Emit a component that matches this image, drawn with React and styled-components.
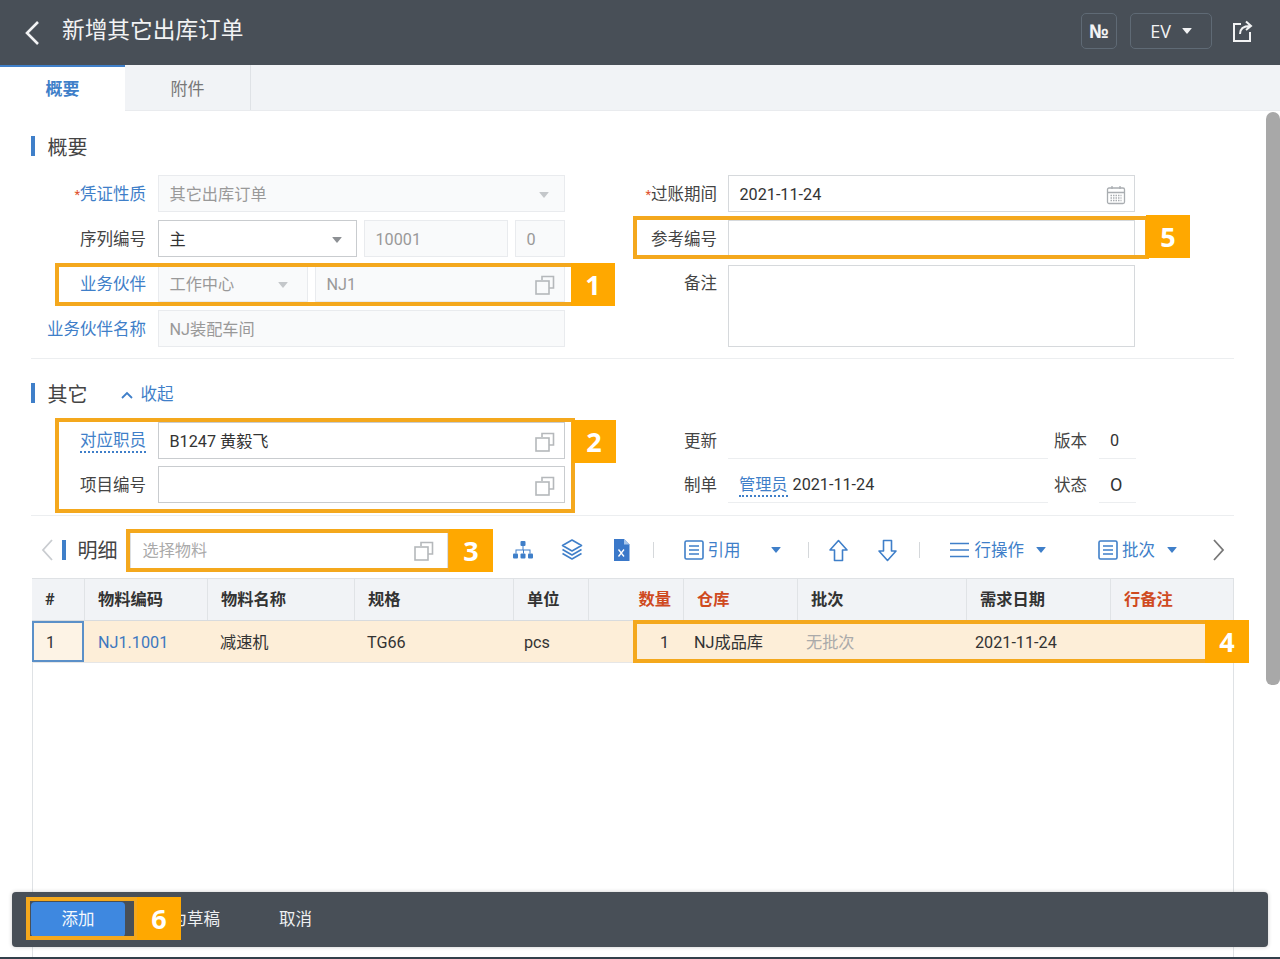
import React from "react";
import styled, { createGlobalStyle } from "styled-components";

const Global = createGlobalStyle`
  html, body { margin: 0; padding: 0; background: #fff; }
  * { box-sizing: border-box; }
  body { font-family: Roboto, "Noto Sans CJK SC", sans-serif; color: #333; line-height: 20px; }
`;

const BLUE = "#3f7fc9";

const Page = styled.div`
  position: relative; width: 1280px; height: 959px; overflow: hidden;
  display: flex; flex-direction: column; background: #fff;
  border-bottom: 2px solid #33404b;
`;
const Header = styled.header`
  flex: none; height: 65px; background: #484f57; display: flex; align-items: center;
  padding: 0 27px 0 24px; color: #f2f3f4;
`;
const BackIcon = styled.svg`width: 16px; height: 26px; margin-right: 22px; flex: none;`;
const Title = styled.h1`margin: -3px 0 0; flex: 1; font-size: 22.7px; font-weight: 400; line-height: 30px;`;
const HeadBtn = styled.div`
  height: 36px; width: ${p => p.$w}px; margin-right: ${p => p.$mr}px; margin-top: -3px;
  border: 1px solid #5f6a75; border-radius: 5px; display: flex; align-items: center; justify-content: center;
  font-size: ${p => p.$fs || 18}px; font-weight: ${p => p.$fw || 400}; gap: 11px; font-family: "Open Sans", sans-serif;
`;
const ShareIcon = styled.svg`width: 21px; height: 22px; margin-top: -4px; flex: none;`;
const Caret = styled.i`
  display: inline-block; width: 0; height: 0; margin-right: ${p => p.$mr || 0}px;
  border-left: 5px solid transparent; border-right: 5px solid transparent;
  border-top: 6px solid ${p => p.$c || "#f2f3f4"}; border-radius: 1px;
`;
const Tabs = styled.nav`flex: none; height: 46px; background: #f1f3f6; display: flex; border-bottom: 1px solid #e9ebee;`;
const Tab = styled.div`
  display: flex; align-items: center; justify-content: center; font-size: 17px; padding-top: 2px;
  ${p => p.$active
    ? `width:125px; background:#fff; color:#3f7fc9; font-weight:700; border-top:2px solid #3f7fc9; margin-bottom:-1px; padding-top:0;`
    : `width:126px; color:#777; border-right:1px solid #dfe2e6;`}
`;
const Content = styled.main`flex: 1; min-height: 0; display: flex; flex-direction: column; padding: 0 46px 0 31px;`;
const Section = styled.section`padding: ${p => p.$pt}px 0 ${p => p.$pb}px; border-bottom: 1px solid #eceef0;`;
const SecHead = styled.div`display: flex; align-items: center; height: 20px; margin-bottom: 19px;`;
const Bar = styled.span`flex: none; width: 3.5px; height: 20px; background: ${BLUE};`;
const SecTitle = styled.h2`margin: 0 0 0 13px; padding-top: 3px; font-size: 20px; font-weight: 400; color: #444; line-height: 20px;`;
const Collapse = styled.span`display: flex; align-items: center; gap: 8px; margin-left: 33px; padding-top: 3px; color: ${BLUE}; font-size: 16.5px;`;
const Columns = styled.div`display: flex; align-items: flex-start;`;
const LeftCol = styled.div`width: 534px; display: flex; flex-direction: column; gap: ${p => p.$gap}px;`;
const RightCol = styled.div`margin-left: 70px; width: 505px; display: flex; flex-direction: column; gap: ${p => p.$gap}px;`;
const Row = styled.div`
  display: grid; grid-template-columns: ${p => p.$cols}; height: ${p => p.$h || 37}px; align-items: stretch; column-gap: ${p => p.$gap ?? 12}px;
`;
const Label = styled.label`
  display: flex; align-items: ${p => p.$top ? "flex-start" : "center"}; justify-content: flex-end; font-size: 16.5px; white-space: nowrap;
  padding-top: ${p => p.$top ? 9 : 2}px;
  color: ${p => p.$link ? BLUE : "#444"};
`;
const Req = styled.span`color: #e0502a; font-size: 13px;`;
const Dashed = styled.span`border-bottom: 2px dotted ${BLUE}; line-height: 21px;`;
const Field = styled.div`
  display: flex; align-items: center; justify-content: space-between; min-width: 0;
  padding: 2px ${p => p.$pr ?? 11}px 0 10.5px; font-size: 16.2px; white-space: nowrap;
  border: 1px solid ${p => p.$disabled ? "#e9ebee" : "#d6d9dc"};
  background: ${p => p.$disabled ? "#f9fafb" : "#fff"};
  color: ${p => p.$disabled ? "#999" : "#333"};
  ${p => p.$dark && "border-color:#c9cccf;"}
`;
const Split = styled.div`display: grid; grid-template-columns: ${p => p.$cols}; column-gap: ${p => p.$gap}px;`;
const Plain = styled.div`
  display: flex; align-items: center; margin-left: ${p => p.$ml}px; padding: 2px 0 0 11px; gap: 5px; font-size: ${p => p.$fs || 16.2}px; color: #333; white-space: nowrap;
  border-bottom: 1px solid #eceef0;
`;
const UserLink = styled.span`color: ${BLUE}; border-bottom: 2px dotted ${BLUE}; line-height: 21px;`;
const Toolbar = styled.div`flex: none; height: 62px; padding-top: 6px; display: flex; align-items: center; color: ${BLUE}; font-size: 16.5px;`;
const ToolItem = styled.span`display: flex; align-items: center; flex: none; margin-left: ${p => p.$ml || 0}px; gap: ${p => p.$gap || 0}px;`;
const ToolText = styled.span`padding-top: 2px;`;
const Sep = styled.span`flex: none; width: 1px; height: 16px; background: #d5d8db; margin-left: ${p => p.$ml}px;`;
const DetailTitle = styled.span`margin-left: 12px; padding-top: 2px; font-size: 20px; color: #444; flex: none;`;
const SelectInput = styled.div`
  flex: none; width: 318px; height: 37px; margin-left: 12px; padding: 2px 12px 0 12px; display: flex; align-items: center; justify-content: space-between;
  border: 1px solid #dcdfe2; font-size: 16.2px; color: #aaa;
`;
const Table = styled.div`flex: 1; min-height: 0; margin-left: 1px; display: flex; flex-direction: column; border-left: 1px solid #dfe2e5; border-right: 1px solid #dfe2e5;`;
const cols = "52px 123px 147px 159px 75px 95px 114px 169px 144px 1fr";
const HeadRow = styled.div`
  flex: none; display: grid; grid-template-columns: ${cols}; height: 43px; background: #f1f3f6; border-top: 1px solid #dfe2e5; border-bottom: 1px solid #d8dbde;
  margin-left: -1px;
`;
const HeadCell = styled.div`
  display: flex; align-items: center; padding: 0 ${p => p.$right ? 12 : 0}px 0 ${p => p.$right ? 0 : 13}px; font-size: 16.3px; font-weight: 700;
  justify-content: ${p => p.$right ? "flex-end" : "flex-start"};
  color: ${p => p.$red ? "#cf4a1f" : "#333"}; border-left: ${p => p.$first ? "none" : "1px solid #e0e3e6"};
`;
const BodyRow = styled.div`
  flex: none; display: grid; grid-template-columns: ${cols}; height: 42px; background: #fdeed8; border-bottom: 1px solid #e6e6e6; margin-left: -1px;
`;
const Cell = styled.div`
  display: flex; align-items: center; font-size: 16.2px; white-space: nowrap; padding: 2px ${p => p.$right ? 14 : 0}px 0 ${p => p.$right ? 0 : (p.$pl ?? 12)}px;
  justify-content: ${p => p.$right ? "flex-end" : "flex-start"};
  color: ${p => p.$c || "#333"};
`;
const IndexCell = styled(Cell)`border: 2px solid #5b90c8; background: #fdf3e5;`;
const Footer = styled.div`
  position: absolute; left: 12px; top: 892px; width: 1256px; height: 55px; background: #484f57; border-radius: 4px;
  display: flex; align-items: center; padding: 0 0 0 19px; color: #eef0f2; font-size: 16.5px; box-shadow: 0 0 4px rgba(0,0,0,.2);
`;
const PrimaryBtn = styled.div`width: 94px; height: 35px; border-radius: 4px; background: #3e88e0; display: flex; align-items: center; justify-content: center; color: #f4f8fd;`;
const GhostBtn = styled.div`margin-left: ${p => p.$ml}px;`;
const Scroll = styled.div`position: absolute; left: 1266px; top: 112px; width: 14px; height: 573px; background: #a8a8a8; border-radius: 7px 7px 6px 6px;`;
const MarkBox = styled.div`
  position: absolute; left: ${p => p.$x}px; top: ${p => p.$y}px; width: ${p => p.$w}px; height: ${p => p.$h}px;
  border: 4px solid #f4a81d;
`;
const Badge = styled.div`
  position: absolute; left: ${p => p.$x}px; top: ${p => p.$y}px; width: 44px; height: 43px; background: #ffa800; color: #fff;
  display: flex; align-items: center; justify-content: center; font: 700 27px "Open Sans", sans-serif;
`;
const FlipSvg = styled.svg`transform: ${p => p.$flip ? "scaleY(-1)" : "none"};`;

const CopyIcon = () => (
  <svg width="22" height="20" viewBox="0 0 22 20" fill="none" stroke="#b5b8bb" strokeWidth="1.6">
    <path d="M8 5V1.5h11.5V13H15" />
    <rect x="2" y="6" width="13" height="13" />
  </svg>
);
const CalIcon = () => (
  <svg width="20" height="20" viewBox="0 0 20 20" fill="none" stroke="#a9adb1" strokeWidth="1.3">
    <rect x="1.5" y="3" width="17" height="15.5" rx="1.5" />
    <path d="M1.5 7.5h17M6 1v3M14 1v3" />
    <path d="M4.5 10.5h11M4.5 13h11M4.5 15.5h11" strokeDasharray="1.5 1" />
  </svg>
);
const TreeIcon = () => (
  <svg width="22" height="20" viewBox="0 0 22 20" fill={BLUE}>
    <rect x="8.5" y="1" width="5" height="5" rx="1" />
    <rect x="1" y="13.5" width="5" height="5" rx="1" />
    <rect x="8.5" y="13.5" width="5" height="5" rx="1" />
    <rect x="16" y="13.5" width="5" height="5" rx="1" />
    <path d="M10.5 6h1v3.5h7v4h-1v-3h-5.5v3h-1v-3H4.500v3h-1v-4h7z" />
  </svg>
);
const LayersIcon = () => (
  <svg width="22" height="24" viewBox="0 0 22 24" fill="none" stroke={BLUE} strokeWidth="1.6" strokeLinejoin="round">
    <path d="M11 2l9.500 5.500L11 13 1.500 7.500z" />
    <path d="M1.500 11.500L11 17l9.500-5.500" />
    <path d="M1.500 15.500L11 21l9.500-5.500" />
  </svg>
);
const ExcelIcon = () => (
  <svg width="17" height="22" viewBox="0 0 17 22">
    <path d="M1 0h10l5.500 5.500V22H1z" fill="#3a78c9" />
    <path d="M11 0l5.500 5.500H11z" fill="#a8c6ea" />
    <path d="M5.500 10.500l5.500 7M11 10.500l-5.500 7" stroke="#fff" strokeWidth="1.300" />
  </svg>
);
const DocIcon = () => (
  <svg width="20" height="20" viewBox="0 0 20 20" fill="none" stroke={BLUE} strokeWidth="1.6">
    <rect x="1" y="1" width="18" height="18" rx="1.500" />
    <path d="M5 6h10M5 10h10M5 14h10" />
  </svg>
);
const UpIcon = ({ flip }) => (
  <FlipSvg $flip={flip} width="19" height="23" viewBox="0 0 19 23" fill="none" stroke={BLUE} strokeWidth="1.6" strokeLinejoin="round">
    <path d="M9.500 1.500L18 11h-4.500v10.500h-8V11H1z" />
  </FlipSvg>
);
const LinesIcon = () => (
  <svg width="19" height="16" viewBox="0 0 19 16" fill="none" stroke={BLUE} strokeWidth="1.700">
    <path d="M0 1.500h19M0 8h19M0 14.500h19" />
  </svg>
);
const Chevron = ({ dir, color }) => (
  <svg width="12" height="22" viewBox="0 0 12 22" fill="none" stroke={color} strokeWidth="1.800">
    <path d={dir === "left" ? "M11 1L2 11l9 10" : "M1 1l9 10-9 10"} />
  </svg>
);

const marks = [
  { n: 1, x: 55, y: 263, w: 520, h: 43, bx: 571, by: 263 },
  { n: 2, x: 55, y: 418, w: 520, h: 95, bx: 572, by: 420 },
  { n: 3, x: 126, y: 529, w: 326, h: 43, bx: 449, by: 529 },
  { n: 4, x: 633, y: 620, w: 576, h: 43, bx: 1205, by: 620 },
  { n: 5, x: 633, y: 216, w: 516, h: 43, bx: 1146, by: 215 },
  { n: 6, x: 26, y: 897, w: 112, h: 43, bx: 137, by: 897 },
];

const headers = [
  ["#"], ["物料编码"], ["物料名称"], ["规格"], ["单位"],
  ["数量", true, true], ["仓库", true], ["批次"], ["需求日期"], ["行备注", true],
];

export default function App() {
  return (
    <Page>
      <Global />
      <Header>
        <BackIcon viewBox="0 0 16 26" fill="none" stroke="#f2f3f4" strokeWidth="2.600"><path d="M14 2L3 13l11 11" /></BackIcon>
        <Title>新增其它出库订单</Title>
        <HeadBtn $w={36} $mr={13} $fs={19} $fw={700}>№</HeadBtn>
        <HeadBtn $w={82} $mr={20}>EV<Caret /></HeadBtn>
        <ShareIcon viewBox="0 0 21 22" fill="none" stroke="#f2f3f4" strokeWidth="2">
          <path d="M9 4H2v17h16v-9" />
          <path d="M8 14c0-5 3-8 10-8M14 1.500L19 6l-5 4" />
        </ShareIcon>
      </Header>
      <Tabs>
        <Tab $active>概要</Tab>
        <Tab>附件</Tab>
      </Tabs>
      <Content>
        <Section $pt={25} $pb={11}>
          <SecHead><Bar /><SecTitle>概要</SecTitle></SecHead>
          <Columns>
            <LeftCol $gap={8}>
              <Row $cols="115px 407px">
                <Label $link><Req>*</Req>凭证性质</Label>
                <Field $disabled>其它出库订单<Caret $c="#c4c7ca" $mr={4} /></Field>
              </Row>
              <Row $cols="115px 407px">
                <Label>序列编号</Label>
                <Split $cols="199px 144px 50px" $gap={7}>
                  <Field $dark>主<Caret $c="#8d9094" $mr={3} /></Field>
                  <Field $disabled>10001</Field>
                  <Field $disabled>0</Field>
                </Split>
              </Row>
              <Row $cols="115px 407px">
                <Label $link>业务伙伴</Label>
                <Split $cols="150px 250px" $gap={7}>
                  <Field $disabled>工作中心<Caret $c="#c4c7ca" $mr={8} /></Field>
                  <Field $disabled $pr={8}>NJ1<CopyIcon /></Field>
                </Split>
              </Row>
              <Row $cols="115px 407px">
                <Label $link>业务伙伴名称</Label>
                <Field $disabled>NJ装配车间</Field>
              </Row>
            </LeftCol>
            <RightCol $gap={8}>
              <Row $cols="82px 407px" $gap={11}>
                <Label><Req>*</Req>过账期间</Label>
                <Field $pr={8}>2021-11-24<CalIcon /></Field>
              </Row>
              <Row $cols="82px 407px" $gap={11}>
                <Label>参考编号</Label>
                <Field />
              </Row>
              <Row $cols="82px 407px" $gap={11} $h={82}>
                <Label $top>备注</Label>
                <Field />
              </Row>
            </RightCol>
          </Columns>
        </Section>
        <Section $pt={24} $pb={12}>
          <SecHead>
            <Bar /><SecTitle>其它</SecTitle>
            <Collapse>
              <svg width="12" height="8" viewBox="0 0 12 8" fill="none" stroke={BLUE} strokeWidth="1.800"><path d="M1 7l5-5 5 5" /></svg>
              收起
            </Collapse>
          </SecHead>
          <Columns>
            <LeftCol $gap={7}>
              <Row $cols="115px 407px">
                <Label $link><Dashed>对应职员</Dashed></Label>
                <Field $dark $pr={8}>B1247 黄毅飞<CopyIcon /></Field>
              </Row>
              <Row $cols="115px 407px">
                <Label>项目编号</Label>
                <Field $dark $pr={8}><span /><CopyIcon /></Field>
              </Row>
            </LeftCol>
            <RightCol $gap={7}>
              <Row $cols="82px 331px 39px 49px" $gap={0}>
                <Label>更新</Label>
                <Plain $ml={11} />
                <Label>版本</Label>
                <Plain $ml={12}>0</Plain>
              </Row>
              <Row $cols="82px 331px 39px 49px" $gap={0}>
                <Label>制单</Label>
                <Plain $ml={11}><UserLink>管理员</UserLink>2021-11-24</Plain>
                <Label>状态</Label>
                <Plain $ml={12} $fs={18}>O</Plain>
              </Row>
            </RightCol>
          </Columns>
        </Section>
        <Toolbar>
          <ToolItem $ml={10}><Chevron dir="left" color="#c9ccd0" /></ToolItem>
          <ToolItem $ml={9}><Bar /></ToolItem>
          <DetailTitle>明细</DetailTitle>
          <SelectInput>选择物料<CopyIcon /></SelectInput>
          <ToolItem $ml={64}><TreeIcon /></ToolItem>
          <ToolItem $ml={27}><LayersIcon /></ToolItem>
          <ToolItem $ml={30}><ExcelIcon /></ToolItem>
          <Sep $ml={23} />
          <ToolItem $ml={30} $gap={4}><DocIcon /><ToolText>引用</ToolText></ToolItem>
          <ToolItem $ml={30}><Caret $c={BLUE} /></ToolItem>
          <Sep $ml={27} />
          <ToolItem $ml={20}><UpIcon /></ToolItem>
          <ToolItem $ml={30}><UpIcon flip /></ToolItem>
          <Sep $ml={22} />
          <ToolItem $ml={30} $gap={6}><LinesIcon /><ToolText>行操作</ToolText></ToolItem>
          <ToolItem $ml={12}><Caret $c={BLUE} /></ToolItem>
          <ToolItem $ml={52} $gap={4}><DocIcon /><ToolText>批次</ToolText></ToolItem>
          <ToolItem $ml={12}><Caret $c={BLUE} /></ToolItem>
          <ToolItem $ml={36}><Chevron dir="right" color="#777" /></ToolItem>
        </Toolbar>
        <Table>
          <HeadRow>
            {headers.map(([t, red, right], i) => (
              <HeadCell key={t} $red={red} $right={right} $first={i === 0}>{t}</HeadCell>
            ))}
          </HeadRow>
          <BodyRow>
            <IndexCell $pl={12}>1</IndexCell>
            <Cell $pl={14} $c="#3d78bf">NJ1.1001</Cell>
            <Cell $pl={13}>减速机</Cell>
            <Cell $pl={13}>TG66</Cell>
            <Cell $pl={11}>pcs</Cell>
            <Cell $right>1</Cell>
            <Cell $pl={11}>NJ成品库</Cell>
            <Cell $pl={9} $c="#aaa">无批次</Cell>
            <Cell $pl={9}>2021-11-24</Cell>
            <Cell />
          </BodyRow>
        </Table>
      </Content>
      <Footer>
        <PrimaryBtn>添加</PrimaryBtn>
        <GhostBtn $ml={29}>存为草稿</GhostBtn>
        <GhostBtn $ml={59}>取消</GhostBtn>
      </Footer>
      <Scroll />
      {marks.map(m => (
        <React.Fragment key={m.n}>
          <MarkBox $x={m.x} $y={m.y} $w={m.w} $h={m.h} />
          <Badge $x={m.bx} $y={m.by}>{m.n}</Badge>
        </React.Fragment>
      ))}
    </Page>
  );
}
